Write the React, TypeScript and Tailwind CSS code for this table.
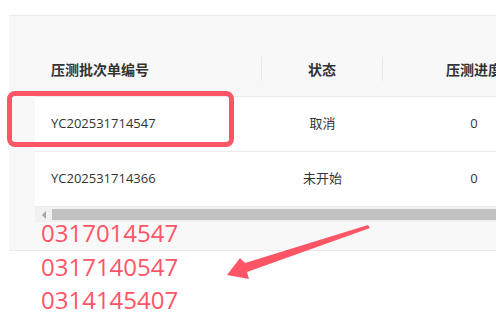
const rows = [
  { code: "YC202531714547", status: "取消", progress: "0" },
  { code: "YC202531714366", status: "未开始", progress: "0" },
];

const notes = ["0317014547", "0317140547", "0314145407"];

export default function App() {
  return (
    <div className="relative w-[496px] h-[329px] overflow-hidden bg-white text-[#333] font-['Open_Sans','Noto_Sans_CJK_SC',sans-serif]">
      <div className="pt-[15px] pl-[9px]">
        {/* Panel with table */}
        <div className="border-y border-[#ebebeb] bg-[#f8f8f8] pl-[26px] pb-[28px]">
          <div className="w-[700px]">
            {/* Header */}
            <div className="flex pt-[41px] pb-[15px] border-b border-[#ebebeb] text-[14px] font-bold">
              <div className="w-[227px] h-[24px] flex items-center pl-4 border-r border-[#e8e8e8]">压测批次单编号</div>
              <div className="w-[121px] h-[24px] flex items-center justify-center border-r border-[#e8e8e8]">状态</div>
              <div className="w-[182px] h-[24px] flex items-center justify-center">压测进度</div>
            </div>
            {/* Body */}
            {rows.map((r) => (
              <div key={r.code} className="flex h-[55px] bg-white border-b border-[#ebebeb] text-[13px]">
                <div className="w-[227px] flex items-center pl-4">{r.code}</div>
                <div className="w-[121px] flex items-center justify-center">{r.status}</div>
                <div className="w-[182px] flex items-center justify-center">{r.progress}</div>
              </div>
            ))}
          </div>
          {/* Horizontal scrollbar */}
          <div className="flex h-[15px] bg-[#f1f1f1]">
            <div className="w-[17px] flex items-center justify-center">
              <div className="w-0 h-0 border-y-[4px] border-y-transparent border-r-[4px] border-r-[#a3a3a3]" />
            </div>
            <div className="flex-1 my-[2px] bg-[#c1c1c1]" />
          </div>
        </div>
      </div>

      {/* Annotations */}
      <div className="absolute left-[7px] top-[91px] w-[227px] h-[56px] border-[5px] border-[#ff5567] rounded-[8px]" />
      <div className="absolute left-[41px] top-[216px] text-[24px] leading-[33.5px] text-[#ff5567]">
        {notes.map((n) => (
          <div key={n}>{n}</div>
        ))}
      </div>
      <svg className="absolute left-0 top-0" width="496" height="329">
        <polygon
          points="368,225 370,228 247,272 249,279 227,275 240,258 245,263"
          fill="#ff5567"
        />
      </svg>
    </div>
  );
}
